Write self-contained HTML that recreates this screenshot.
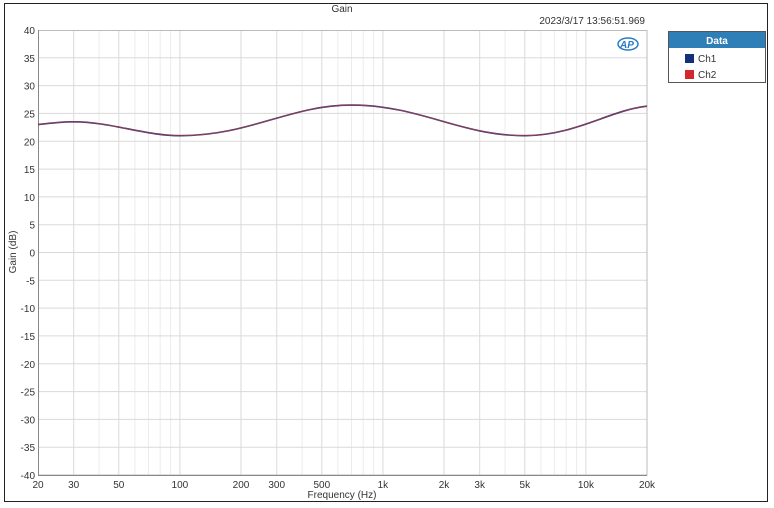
<!DOCTYPE html>
<html><head><meta charset="utf-8"><style>
html,body{margin:0;padding:0;background:#fff;width:774px;height:508px;overflow:hidden}
svg text{font-family:"Liberation Sans",sans-serif;fill:#333}
</style></head><body>
<svg width="774" height="508" viewBox="0 0 774 508" xmlns="http://www.w3.org/2000/svg">
<rect x="4.5" y="3.5" width="763" height="498" fill="#fff" stroke="#222" stroke-width="1"/>
<text x="342" y="12" font-size="10" text-anchor="middle">Gain</text>
<text x="645" y="24" font-size="10" text-anchor="end">2023/3/17 13:56:51.969</text>
<g stroke="#ececec" stroke-width="1">
<line x1="99.1" y1="30" x2="99.1" y2="475"/><line x1="134.9" y1="30" x2="134.9" y2="475"/><line x1="148.5" y1="30" x2="148.5" y2="475"/><line x1="160.2" y1="30" x2="160.2" y2="475"/><line x1="170.6" y1="30" x2="170.6" y2="475"/>
<line x1="302.1" y1="30" x2="302.1" y2="475"/><line x1="337.9" y1="30" x2="337.9" y2="475"/><line x1="351.5" y1="30" x2="351.5" y2="475"/><line x1="363.2" y1="30" x2="363.2" y2="475"/><line x1="373.6" y1="30" x2="373.6" y2="475"/>
<line x1="505.1" y1="30" x2="505.1" y2="475"/><line x1="540.9" y1="30" x2="540.9" y2="475"/><line x1="554.5" y1="30" x2="554.5" y2="475"/><line x1="566.2" y1="30" x2="566.2" y2="475"/><line x1="576.6" y1="30" x2="576.6" y2="475"/>
</g>
<g stroke="#dadada" stroke-width="1">
<line x1="73.7" y1="30" x2="73.7" y2="475"/><line x1="118.8" y1="30" x2="118.8" y2="475"/><line x1="179.9" y1="30" x2="179.9" y2="475"/><line x1="241" y1="30" x2="241" y2="475"/><line x1="276.7" y1="30" x2="276.7" y2="475"/><line x1="321.8" y1="30" x2="321.8" y2="475"/><line x1="382.9" y1="30" x2="382.9" y2="475"/><line x1="444" y1="30" x2="444" y2="475"/><line x1="479.7" y1="30" x2="479.7" y2="475"/><line x1="524.8" y1="30" x2="524.8" y2="475"/><line x1="585.9" y1="30" x2="585.9" y2="475"/>
<line x1="38" y1="57.8" x2="647" y2="57.8"/><line x1="38" y1="85.6" x2="647" y2="85.6"/><line x1="38" y1="113.4" x2="647" y2="113.4"/><line x1="38" y1="141.3" x2="647" y2="141.3"/><line x1="38" y1="169.1" x2="647" y2="169.1"/><line x1="38" y1="196.9" x2="647" y2="196.9"/><line x1="38" y1="224.7" x2="647" y2="224.7"/><line x1="38" y1="252.5" x2="647" y2="252.5"/><line x1="38" y1="280.3" x2="647" y2="280.3"/><line x1="38" y1="308.1" x2="647" y2="308.1"/><line x1="38" y1="335.9" x2="647" y2="335.9"/><line x1="38" y1="363.8" x2="647" y2="363.8"/><line x1="38" y1="391.6" x2="647" y2="391.6"/><line x1="38" y1="419.4" x2="647" y2="419.4"/><line x1="38" y1="447.2" x2="647" y2="447.2"/>
</g>
<rect x="38.5" y="30.5" width="608.5" height="444.5" fill="none" stroke="#bbb"/>
<line x1="38.5" y1="30" x2="38.5" y2="475" stroke="#888"/>
<line x1="38" y1="475.5" x2="647" y2="475.5" stroke="#888"/>
<g font-size="10" text-anchor="end">
<text x="35" y="34">40</text><text x="35" y="62">35</text><text x="35" y="89.6">30</text><text x="35" y="117.4">25</text><text x="35" y="145.3">20</text><text x="35" y="173.1">15</text><text x="35" y="200.9">10</text><text x="35" y="228.7">5</text><text x="35" y="256.5">0</text><text x="35" y="284.3">-5</text><text x="35" y="312.1">-10</text><text x="35" y="339.9">-15</text><text x="35" y="367.8">-20</text><text x="35" y="395.6">-25</text><text x="35" y="423.4">-30</text><text x="35" y="451.2">-35</text><text x="35" y="479">-40</text>
</g>
<g font-size="10" text-anchor="middle">
<text x="38" y="488">20</text><text x="73.7" y="488">30</text><text x="118.8" y="488">50</text><text x="179.9" y="488">100</text><text x="241" y="488">200</text><text x="276.7" y="488">300</text><text x="321.8" y="488">500</text><text x="382.9" y="488">1k</text><text x="444" y="488">2k</text><text x="479.7" y="488">3k</text><text x="524.8" y="488">5k</text><text x="585.9" y="488">10k</text><text x="647" y="488">20k</text>
<text x="342" y="498">Frequency (Hz)</text>
</g>
<text x="0" y="0" font-size="10" text-anchor="middle" transform="translate(16,252) rotate(-90)">Gain (dB)</text>
<path d="M38,124.6 C50,123 62,121.8 73.8,121.8 C110,121.8 145,135.7 180,135.7 C250,135.7 290,105.1 351.5,105.1 C420,105.1 460,135.7 524.8,135.7 C575,135.7 610,110 647,106.2" fill="none" stroke="#1a2e6e" stroke-width="1.6"/>
<path d="M38,124.6 C50,123 62,121.8 73.8,121.8 C110,121.8 145,135.7 180,135.7 C250,135.7 290,105.1 351.5,105.1 C420,105.1 460,135.7 524.8,135.7 C575,135.7 610,110 647,106.2" fill="none" stroke="#b84050" stroke-width="1" opacity="0.8"/>
<g>
<ellipse cx="628" cy="44" rx="10" ry="6" fill="none" stroke="#2a7bc8" stroke-width="1.5"/>
<text x="627" y="48" font-size="10" font-weight="bold" font-style="italic" text-anchor="middle" style="fill:#2a7bc8">AP</text>
</g>
<rect x="668.5" y="31.5" width="97" height="51" fill="#fff" stroke="#555"/>
<rect x="669" y="32" width="96" height="16" fill="#2e7fb8"/>
<text x="717" y="44" font-size="10" font-weight="bold" text-anchor="middle" style="fill:#fff">Data</text>
<rect x="685" y="54" width="9" height="9" fill="#14307a"/>
<text x="698" y="62" font-size="10">Ch1</text>
<rect x="685" y="70" width="9" height="9" fill="#d0282c"/>
<text x="698" y="78" font-size="10">Ch2</text>
</svg>
</body></html>
